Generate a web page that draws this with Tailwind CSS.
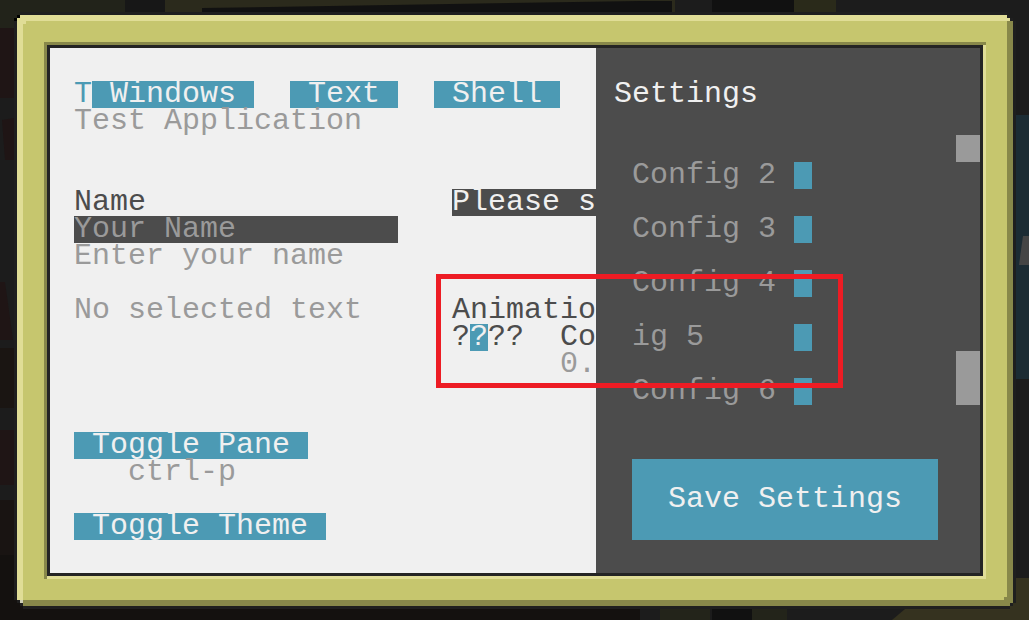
<!DOCTYPE html>
<html>
<head>
  <title>Settings Terminal</title>
  <meta charset="UTF-8">
  <script src="https://cdn.jsdelivr.net/npm/@tailwindcss/browser@4"></script>
</head>
<body class="bg-[#1a1a1a]">
  <div class="relative w-[1029px] h-[620px] overflow-hidden pl-[14px] pt-[12px] font-['Liberation_Mono',monospace] text-[30px] leading-[27px]">
    <!-- world behind the frame -->
    <svg class="absolute inset-0" width="1029" height="620" viewBox="0 0 1029 620">
      <rect width="1029" height="620" fill="#1c1c1c"/>
      <rect x="0" y="0" width="125" height="28" fill="#22231a"/>
      <rect x="125" y="0" width="40" height="12" fill="#171717"/>
      <rect x="165" y="0" width="510" height="12" fill="#2b2a1c"/>
      <polygon points="202,12 202,8 640,1 672,1 672,12" fill="#111111"/>
      <rect x="712" y="0" width="82" height="12" fill="#111111"/>
      <rect x="794" y="0" width="42" height="12" fill="#2a2a1a"/>
      <rect x="0" y="28" width="14" height="70" fill="#1f1515"/>
      <polygon points="2,120 14,118 14,160 5,160" fill="#1f1515"/>
      <polygon points="0,282 5,282 13,340 0,340" fill="#1f1515"/>
      <rect x="0" y="348" width="14" height="60" fill="#1a1512"/>
      <rect x="0" y="430" width="14" height="55" fill="#1f1515"/>
      <rect x="0" y="500" width="14" height="55" fill="#191412"/>
      <rect x="0" y="555" width="14" height="65" fill="#14110f"/>
      <rect x="0" y="609" width="640" height="11" fill="#14110f"/>
      <rect x="660" y="609" width="50" height="11" fill="#23241a"/>
      <rect x="712" y="609" width="40" height="11" fill="#111111"/>
      <rect x="752" y="609" width="35" height="11" fill="#23241a"/>
      <polygon points="892,620 905,609 1029,609 1029,620" fill="#35321f"/>
      <rect x="1016" y="115" width="13" height="264" fill="#1c2c34"/>
      <polygon points="1023,236 1029,236 1029,265 1019,265 1021,250" fill="#454545"/>
      <rect x="1016" y="578" width="13" height="42" fill="#35321f"/>
    </svg>

    <!-- frame -->
    <div class="relative w-[1002px] h-[597px] border-[3px] border-[#1f1f1f]">
      <div class="h-full border-[6px] border-t-[#e0dd96] border-l-[#e0dd96] border-r-[#88884a] border-b-[#88884a] bg-[#c6c66e] p-[21px]">
        <div class="h-full border-[3px] border-t-[#88884a] border-l-[#88884a] border-r-[#e0dd96] border-b-[#e0dd96]">
          <div class="flex h-full border-[3px] border-[#242424]">

            <!-- left pane -->
            <div class="w-[546px] h-full bg-[#f0f0f0] overflow-hidden pl-[24px] pt-[33px]">
              <pre class="font-['Liberation_Mono',monospace] text-[30px] leading-[27px] text-[#4c4c4c]"><span class="text-[#4c9ab4]">T</span><span class="inline-block h-[27px] bg-[#4c9ab4] text-[#f0f0f0]"> Windows </span>  <span class="inline-block h-[27px] bg-[#4c9ab4] text-[#f0f0f0]"> Text </span>  <span class="inline-block h-[27px] bg-[#4c9ab4] text-[#f0f0f0]"> Shell </span>
<span class="text-[#9a9a9a]">Test Application</span>


Name                 <span class="inline-block h-[27px] bg-[#4c4c4c] text-[#f0f0f0]">Please s</span>
<span class="inline-block h-[27px] bg-[#4c4c4c] text-[#9a9a9a]">Your Name         </span>
<span class="text-[#9a9a9a]">Enter your name</span>

<span class="text-[#9a9a9a]">No selected text</span>     Animatio
                     ?<span class="inline-block h-[27px] bg-[#4c9ab4] text-[#f0f0f0]">?</span>??  Co
                           <span class="text-[#9a9a9a]">0.</span>


<span class="inline-block h-[27px] bg-[#4c9ab4] text-[#f0f0f0]"> Toggle Pane </span>
<span class="text-[#9a9a9a]">   ctrl-p</span>

<span class="inline-block h-[27px] bg-[#4c9ab4] text-[#f0f0f0]"> Toggle Theme </span></pre>
            </div>

            <!-- settings pane -->
            <div class="flex flex-1 h-full bg-[#4c4c4c] overflow-hidden">
              <div class="flex-1 pl-[18px] pt-[33px]">
                <div class="h-[27px] text-[#f0f0f0]">Settings</div>
                <div class="flex flex-col gap-[27px] mt-[54px] pl-[18px] text-[#9a9a9a]">
                  <div class="flex h-[27px]"><span class="w-[162px]">Config 2</span><span class="w-[18px] bg-[#4c9ab4]"></span></div>
                  <div class="flex h-[27px]"><span class="w-[162px]">Config 3</span><span class="w-[18px] bg-[#4c9ab4]"></span></div>
                  <div class="flex h-[27px]"><span class="w-[162px]">Config 4</span><span class="w-[18px] bg-[#4c9ab4]"></span></div>
                  <div class="flex h-[27px]"><span class="w-[162px]">ig 5</span><span class="w-[18px] bg-[#4c9ab4]"></span></div>
                  <div class="flex h-[27px]"><span class="w-[162px]">Config 6</span><span class="w-[18px] bg-[#4c9ab4]"></span></div>
                </div>
                <div class="flex items-center justify-center w-[306px] h-[81px] mt-[54px] ml-[18px] bg-[#4c9ab4] text-[#f0f0f0]">Save Settings</div>
              </div>
              <div class="w-[24px] pt-[87px]">
                <div class="h-[27px] bg-[#9a9a9a]"></div>
                <div class="h-[54px] mt-[189px] bg-[#9a9a9a]"></div>
              </div>
            </div>

          </div>
        </div>
      </div>
    </div>

    <!-- stepped pixel corners of the frame -->
    <svg class="absolute inset-0 pointer-events-none" width="1029" height="620" viewBox="0 0 1029 620" shape-rendering="crispEdges">
      <!-- top left -->
      <rect x="14" y="12" width="6" height="3" fill="#22231a"/>
      <rect x="14" y="15" width="3" height="3" fill="#22231a"/>
      <rect x="17" y="15" width="3" height="3" fill="#000000"/>
      <rect x="14" y="18" width="3" height="3" fill="#000000"/>
      <rect x="17" y="18" width="9" height="3" fill="#e0dd96"/>
      <rect x="23" y="21" width="3" height="3" fill="#e0dd96"/>
      <!-- top right -->
      <rect x="1007" y="12" width="9" height="3" fill="#1c1c1c"/>
      <rect x="1007" y="15" width="3" height="3" fill="#1f1f1f"/>
      <rect x="1010" y="15" width="6" height="3" fill="#1c1c1c"/>
      <rect x="1007" y="18" width="3" height="3" fill="#e0dd96"/>
      <rect x="1010" y="18" width="3" height="3" fill="#1f1f1f"/>
      <rect x="1013" y="18" width="3" height="3" fill="#1c1c1c"/>
      <!-- bottom right -->
      <rect x="1004" y="597" width="3" height="3" fill="#88884a"/>
      <rect x="1010" y="603" width="3" height="3" fill="#1f1f1f"/>
      <rect x="1013" y="603" width="3" height="6" fill="#35321f"/>
      <rect x="1010" y="606" width="3" height="3" fill="#35321f"/>
      <!-- bottom left -->
      <rect x="14" y="600" width="3" height="9" fill="#14110f"/>
      <rect x="17" y="600" width="3" height="3" fill="#1f1f1f"/>
      <rect x="20" y="600" width="3" height="3" fill="#cfcfb8"/>
      <rect x="17" y="603" width="3" height="6" fill="#14110f"/>
      <rect x="20" y="603" width="3" height="3" fill="#1f1f1f"/>
      <rect x="20" y="606" width="3" height="3" fill="#14110f"/>
      <!-- inner corners -->
      <rect x="983" y="42" width="3" height="3" fill="#88884a"/>
      <rect x="44" y="576" width="3" height="3" fill="#88884a"/>
    </svg>

    <!-- red annotation box -->
    <div class="absolute left-[436px] top-[274px] w-[407px] h-[114px] border-[5px] border-[#ed1c24]"></div>
  </div>
</body>
</html>
